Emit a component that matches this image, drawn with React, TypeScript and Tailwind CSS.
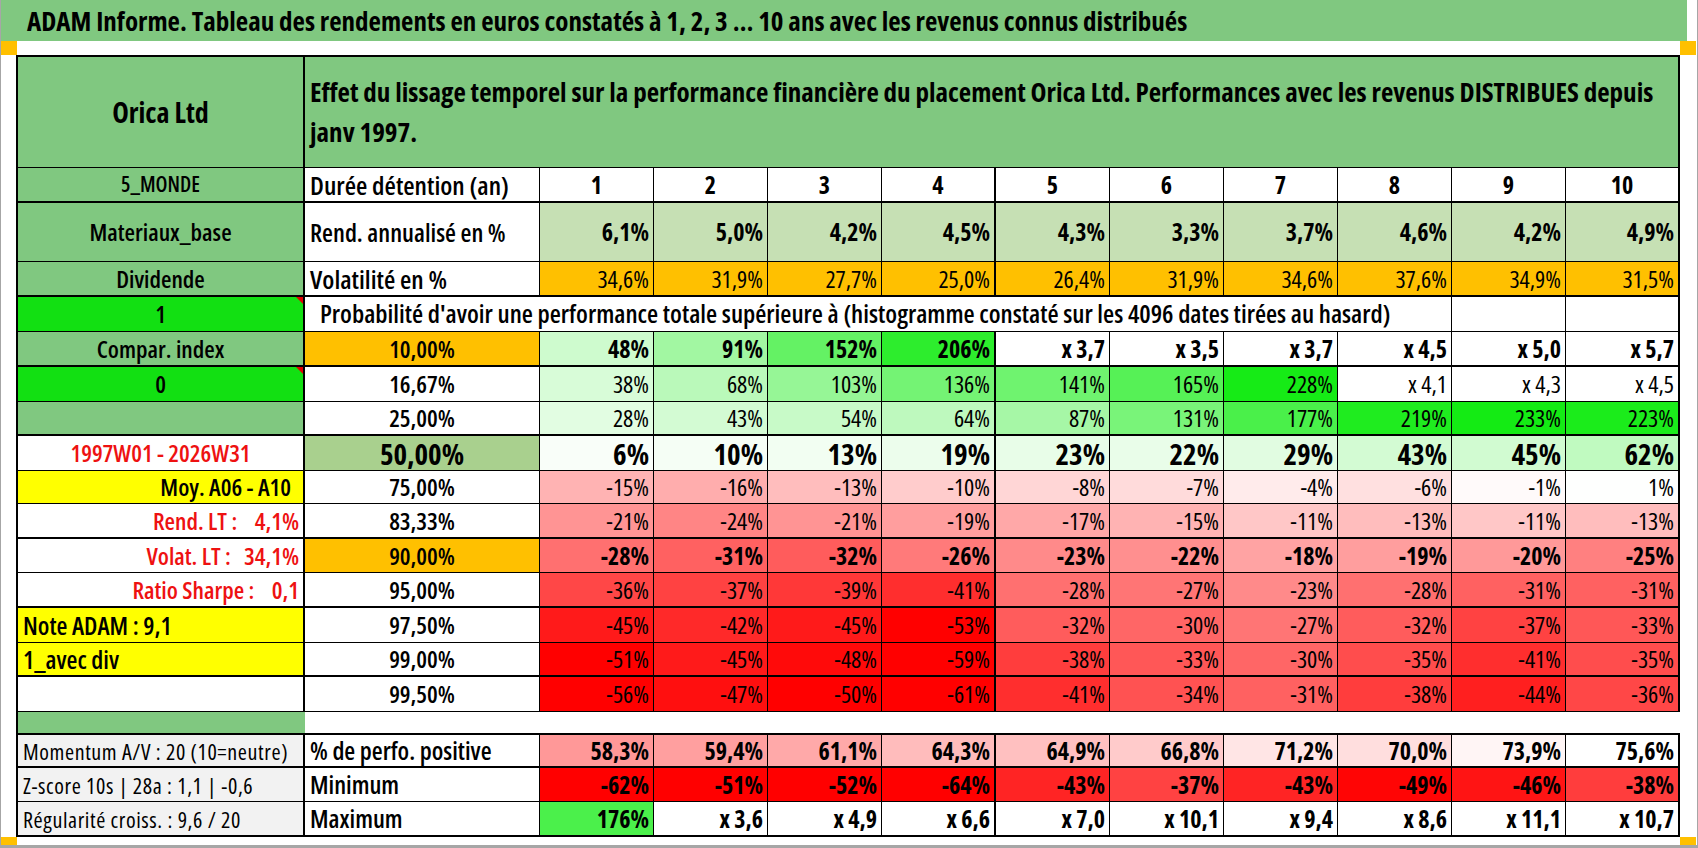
import type { CSSProperties, ReactNode } from 'react'

// couleurs de la feuille
const GREEN = 'bg-[#80c880]'
const BRIGHT = 'bg-[#12e012]'
const YELLOW = 'bg-[#ffff00]'
const ORANGE = 'bg-[#ffc000]'
const RED_TXT = 'text-[#ee1111]'
const LABEL = 'pl-[5px] text-[25px] font-semibold'

const thickRows = new Set([1, 3, 5, 7, 10, 12, 14, 17, 19])

function borders(row: number, col: number) {
  const r = col === 0 || col === 5 || col === 11 ? 'border-r-2' : 'border-r'
  const b = thickRows.has(row) ? 'border-b-2' : 'border-b'
  const l = col === 0 ? 'border-l-2' : ''
  const t = row === 0 || row === 17 ? 'border-t-2' : ''
  return `${r} ${b} ${l} ${t}`
}

function Cell({
  row,
  col,
  className = '',
  style,
  children,
}: {
  row: number
  col: number
  className?: string
  style?: CSSProperties
  children?: ReactNode
}) {
  return (
    <div
      className={`relative flex items-center whitespace-pre border-black ${borders(row, col)} ${className}`}
      style={style}
    >
      {children}
    </div>
  )
}

function Flag() {
  return <span className="absolute right-0 top-0 border-l-[7px] border-t-[7px] border-l-transparent border-t-[#e00000]" />
}

// dégradés de la mise en forme conditionnelle
const clamp = (t: number) => Math.max(0, Math.min(1, t))
function green(v: number) {
  const t = clamp(v / 230)
  const rb = Math.round(255 - t * 235)
  const g = Math.round(255 - t * 20)
  return `rgb(${rb},${g},${rb})`
}
function red(t: number) {
  const gb = Math.round(255 - clamp(t) * 255)
  return `rgb(255,${gb},${gb})`
}
function heat(v: string) {
  if (v.startsWith('x')) return '#ffffff'
  const n = parseFloat(v.replace(',', '.'))
  return n >= 0 ? green(n) : red(-n / 50)
}

const years = ['1', '2', '3', '4', '5', '6', '7', '8', '9', '10']
const rend = ['6,1%', '5,0%', '4,2%', '4,5%', '4,3%', '3,3%', '3,7%', '4,6%', '4,2%', '4,9%']
const vol = ['34,6%', '31,9%', '27,7%', '25,0%', '26,4%', '31,9%', '34,6%', '37,6%', '34,9%', '31,5%']

type PRow = { label: string; left: ReactNode; leftCls: string; pctCls: string; valCls: string; vals: string[]; flag?: boolean }

const pRows: PRow[] = [
  {
    label: '10,00%', left: 'Compar. index', leftCls: `${GREEN} justify-center font-semibold`, pctCls: `${ORANGE} font-semibold`,
    valCls: 'font-bold',
    vals: ['48%', '91%', '152%', '206%', 'x 3,7', 'x 3,5', 'x 3,7', 'x 4,5', 'x 5,0', 'x 5,7'],
  },
  {
    label: '16,67%', left: '0', leftCls: `${BRIGHT} justify-center font-semibold`, pctCls: 'font-semibold', valCls: '', flag: true,
    vals: ['38%', '68%', '103%', '136%', '141%', '165%', '228%', 'x 4,1', 'x 4,3', 'x 4,5'],
  },
  {
    label: '25,00%', left: '', leftCls: GREEN, pctCls: 'font-semibold', valCls: '',
    vals: ['28%', '43%', '54%', '64%', '87%', '131%', '177%', '219%', '233%', '223%'],
  },
  {
    label: '50,00%', left: '1997W01 - 2026W31', leftCls: `justify-center font-semibold ${RED_TXT}`,
    pctCls: 'bg-[#a9d08e] font-bold text-[29px]', valCls: 'font-bold text-[29px]',
    vals: ['6%', '10%', '13%', '19%', '23%', '22%', '29%', '43%', '45%', '62%'],
  },
  {
    label: '75,00%', left: 'Moy. A06 - A10', leftCls: `${YELLOW} justify-end pr-[12px] font-semibold`, pctCls: 'font-semibold', valCls: '',
    vals: ['-15%', '-16%', '-13%', '-10%', '-8%', '-7%', '-4%', '-6%', '-1%', '1%'],
  },
  {
    label: '83,33%', left: 'Rend. LT :    4,1%', leftCls: `justify-end pr-[4px] font-semibold ${RED_TXT}`, pctCls: 'font-semibold', valCls: '',
    vals: ['-21%', '-24%', '-21%', '-19%', '-17%', '-15%', '-11%', '-13%', '-11%', '-13%'],
  },
  {
    label: '90,00%', left: 'Volat. LT :   34,1%', leftCls: `justify-end pr-[4px] font-semibold ${RED_TXT}`, pctCls: `${ORANGE} font-semibold`,
    valCls: 'font-bold',
    vals: ['-28%', '-31%', '-32%', '-26%', '-23%', '-22%', '-18%', '-19%', '-20%', '-25%'],
  },
  {
    label: '95,00%', left: 'Ratio Sharpe :    0,1', leftCls: `justify-end pr-[4px] font-semibold ${RED_TXT}`, pctCls: 'font-semibold', valCls: '',
    vals: ['-36%', '-37%', '-39%', '-41%', '-28%', '-27%', '-23%', '-28%', '-31%', '-31%'],
  },
  {
    label: '97,50%', left: 'Note ADAM : 9,1', leftCls: `${YELLOW} pl-[5px] text-[25px] font-semibold`, pctCls: 'font-semibold', valCls: '',
    vals: ['-45%', '-42%', '-45%', '-53%', '-32%', '-30%', '-27%', '-32%', '-37%', '-33%'],
  },
  {
    label: '99,00%', left: '1_avec div', leftCls: `${YELLOW} pl-[5px] text-[25px] font-semibold`, pctCls: 'font-semibold', valCls: '',
    vals: ['-51%', '-45%', '-48%', '-59%', '-38%', '-33%', '-30%', '-35%', '-41%', '-35%'],
  },
  {
    label: '99,50%', left: '', leftCls: '', pctCls: 'font-semibold', valCls: '',
    vals: ['-56%', '-47%', '-50%', '-61%', '-41%', '-34%', '-31%', '-38%', '-44%', '-36%'],
  },
]

const perfo = ['58,3%', '59,4%', '61,1%', '64,3%', '64,9%', '66,8%', '71,2%', '70,0%', '73,9%', '75,6%']
const mini = ['-62%', '-51%', '-52%', '-64%', '-43%', '-37%', '-43%', '-49%', '-46%', '-38%']
const maxi = ['176%', 'x 3,6', 'x 4,9', 'x 6,6', 'x 7,0', 'x 10,1', 'x 9,4', 'x 8,6', 'x 11,1', 'x 10,7']

const bottom = [
  { left: 'Momentum A/V : 20 (10=neutre)', label: '% de perfo. positive', vals: perfo, bg: (v: string) => red((75.6 - parseFloat(v.replace(',', '.'))) / 43) },
  { left: 'Z-score 10s | 28a : 1,1 | -0,6', label: 'Minimum', vals: mini, bg: heat },
  { left: 'Régularité croiss. : 9,6 / 20', label: 'Maximum', vals: maxi, bg: heat },
]

export default function App() {
  return (
    <div className="flex h-[848px] w-[1698px] flex-col overflow-hidden border-x border-b-[3px] border-[#a6a6a6] bg-white font-['Open_Sans',sans-serif] text-[24px] leading-none text-black [font-stretch:condensed]">
      {/* bandeau titre */}
      <div className={`mr-[10px] flex h-[41px] shrink-0 items-center pl-[26px] text-[27px] font-bold ${GREEN}`}>
        ADAM Informe. Tableau des rendements en euros constatés à 1, 2, 3 … 10 ans avec les revenus connus distribués
      </div>
      <div className="flex h-[14px] shrink-0 justify-between pr-[1px]">
        <div className={`w-[16px] ${ORANGE}`} />
        <div className={`w-[16px] ${ORANGE}`} />
      </div>

      <div className="ml-[15px] grid w-[1664px] grid-cols-[289px_235px_repeat(10,114px)] grid-rows-[113px_35px_59px_35px_35px_35px_35px_34px_35px_33px_35px_34px_35px_35px_34px_35px_21px_35px_34px_35px]">
        {/* en-tête */}
        <Cell row={0} col={0} className={`${GREEN} justify-center text-[28px] font-bold`}>Orica Ltd</Cell>
        <Cell row={0} col={11} className={`col-span-11 ${GREEN} pl-[5px] text-[27px] leading-[40px] font-bold whitespace-normal`}>
          <div>
            Effet du lissage temporel sur la performance financière du placement Orica Ltd. Performances avec les revenus DISTRIBUES depuis
            <br />
            janv 1997.
          </div>
        </Cell>

        <Cell row={1} col={0} className={`${GREEN} justify-center text-[21px] font-semibold`}>5_MONDE</Cell>
        <Cell row={1} col={1} className="pl-[5px] text-[26px] font-semibold">Durée détention (an)</Cell>
        {years.map((y, i) => (
          <Cell key={y} row={1} col={i + 2} className="justify-center font-bold">{y}</Cell>
        ))}

        <Cell row={2} col={0} className={`${GREEN} justify-center font-semibold`}>Materiaux_base</Cell>
        <Cell row={2} col={1} className={LABEL}>Rend. annualisé en %</Cell>
        {rend.map((v, i) => (
          <Cell key={i} row={2} col={i + 2} className="justify-end bg-[#c6e0b4] pr-[4px] font-bold">{v}</Cell>
        ))}

        <Cell row={3} col={0} className={`${GREEN} justify-center font-semibold`}>Dividende</Cell>
        <Cell row={3} col={1} className="pl-[5px] text-[26px] font-semibold">Volatilité en %</Cell>
        {vol.map((v, i) => (
          <Cell key={i} row={3} col={i + 2} className={`justify-end pr-[4px] ${ORANGE}`}>{v}</Cell>
        ))}

        <Cell row={4} col={0} className={`${BRIGHT} justify-center font-semibold`}>
          1
          <Flag />
        </Cell>
        <Cell row={4} col={9} className="col-span-9 pl-[15px] text-[25.5px] font-semibold">
          Probabilité d'avoir une performance totale supérieure à (histogramme constaté sur les 4096 dates tirées au hasard)
        </Cell>
        <Cell row={4} col={10} />
        <Cell row={4} col={11} />

        {pRows.map((r, ri) => {
          const row = ri + 5
          return [
            <Cell key={`l${ri}`} row={row} col={0} className={r.leftCls}>
              {r.left}
              {r.flag && <Flag />}
            </Cell>,
            <Cell key={`p${ri}`} row={row} col={1} className={`justify-center ${r.pctCls}`}>{r.label}</Cell>,
            ...r.vals.map((v, i) => (
              <Cell key={`v${ri}-${i}`} row={row} col={i + 2} className={`justify-end pr-[4px] ${r.valCls}`} style={{ backgroundColor: heat(v) }}>
                {v}
              </Cell>
            )),
          ]
        })}

        {/* séparation */}
        <div className={`border-l-2 border-black ${GREEN}`} />
        <div className="col-span-11" />

        {bottom.map((r, ri) => {
          const row = ri + 17
          return [
            <Cell key={`bl${ri}`} row={row} col={0} className="bg-[#f2f2f2] pl-[5px] text-[22px] font-medium tracking-[0.6px]">{r.left}</Cell>,
            <Cell key={`bp${ri}`} row={row} col={1} className={LABEL}>{r.label}</Cell>,
            ...r.vals.map((v, i) => (
              <Cell key={`bv${ri}-${i}`} row={row} col={i + 2} className="justify-end pr-[4px] font-bold" style={{ backgroundColor: r.bg(v) }}>
                {v}
              </Cell>
            )),
          ]
        })}
      </div>

      <div className="flex h-[8px] shrink-0 justify-between pr-[1px]">
        <div className={`w-[16px] ${ORANGE}`} />
        <div className={`w-[16px] ${ORANGE}`} />
      </div>
    </div>
  )
}
